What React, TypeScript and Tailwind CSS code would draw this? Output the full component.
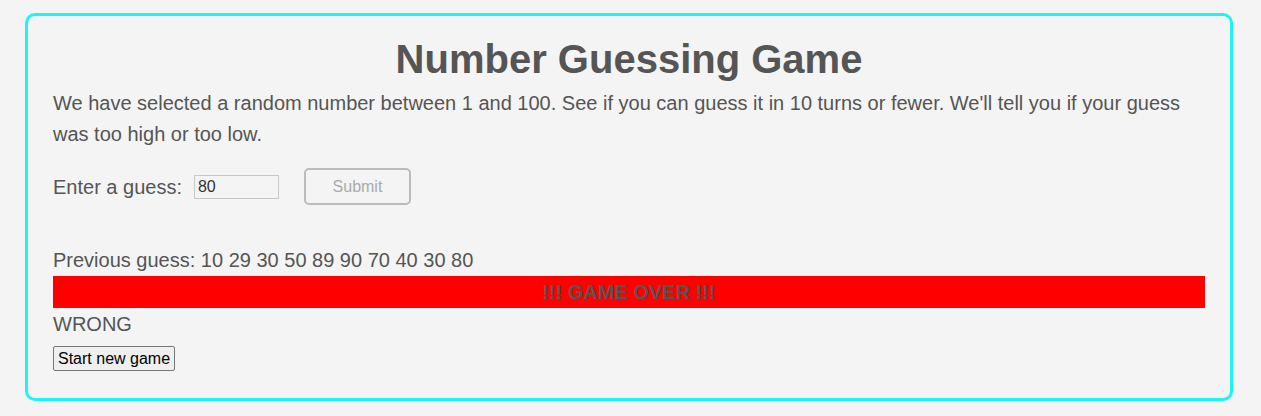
import React, { useState } from 'react';

const guesses = [10, 29, 30, 50, 89, 90, 70, 40, 30, 80];

export default function App() {
  const [value, setValue] = useState('80');
  return (
    <div className="min-h-[416px] bg-[#f4f4f4] pt-[13px] font-['Liberation_Sans',Arial,sans-serif] text-[#555]">
      <div className="ml-[25px] w-[1208px] rounded-[10px] border-[3px] border-[#1ff4f4] px-[25px] pt-[20px] pb-[27px]">
        <h1 className="text-center text-[40px] leading-[46px] font-bold">Number Guessing Game</h1>
        <p className="mt-[6px] text-[20px] leading-[31px]">
          We have selected a random number between 1 and 100. See if you can guess it in 10 turns or fewer. We'll
          tell you if your guess was too high or too low.
        </p>
        <div className="mt-[18px] flex items-center">
          <label className="text-[20px]">Enter a guess:</label>
          <input
            value={value}
            onChange={e => setValue(e.target.value)}
            className="ml-[12px] h-[24px] w-[85px] border border-[#c8c8c8] bg-[#f4f4f4] px-[3px] text-[16px] text-[#333] outline-none"
          />
          <button
            disabled
            className="ml-[25px] h-[37px] w-[107px] rounded-[5px] border-2 border-[#bbb] text-[16px] text-[#aaa]"
          >
            Submit
          </button>
        </div>
        <div className="mt-[43px] text-[20px] leading-[24px]">Previous guess: {guesses.join(' ')}</div>
        <div className="mt-[4px] h-[32px] bg-[#ff0000] text-center text-[20px] leading-[33px] font-bold">
          !!! GAME OVER !!!
        </div>
        <div className="mt-[4px] text-[20px] leading-[24px]">WRONG</div>
        <button className="mt-[10px] h-[25px] rounded-[2px] border border-[#767676] bg-[#efefef] px-[4px] text-[16px] leading-[23px] text-black">
          Start new game
        </button>
      </div>
    </div>
  );
}
